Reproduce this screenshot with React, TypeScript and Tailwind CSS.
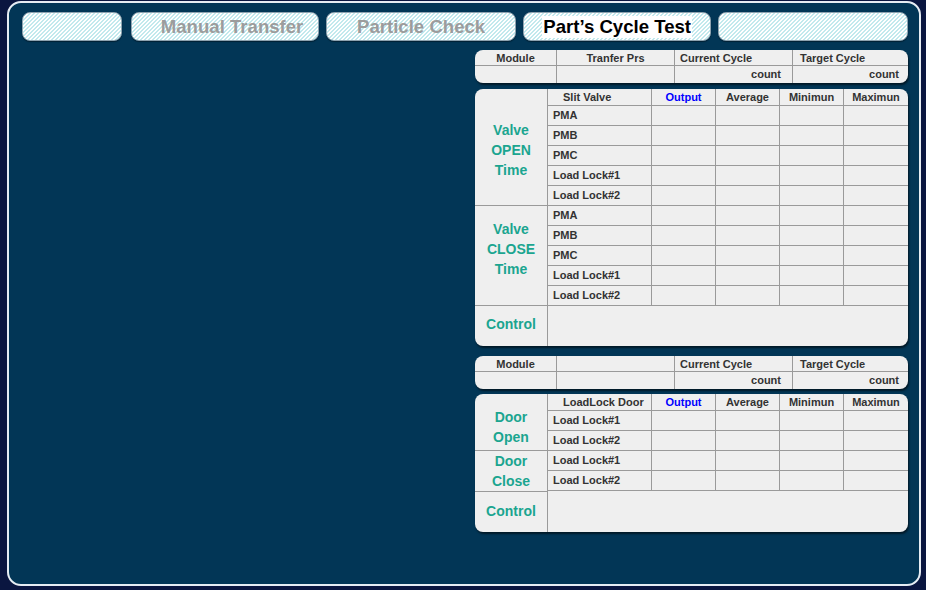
import React from 'react';

const FONT = { fontFamily: '"Liberation Sans", Arial, sans-serif' };
const STRIPES =
  'bg-[repeating-linear-gradient(135deg,#ffffff_0px,#ffffff_1.5px,#c2e9ed_1.5px,#c2e9ed_2.83px)]';
const LINE = 'border-[#9a9a9a]';

interface Group {
  label: string[];
  pt: string;
  rows: string[];
}

function Tab({ width, label, active, extra = '' }: { width: string; label?: string; active?: boolean; extra?: string }) {
  return (
    <div
      className={`${width} ${STRIPES} ${extra} flex h-[29px] items-center justify-center rounded-[8px] border border-[#8fa3b0] shadow-[0_1px_1px_rgba(0,0,0,0.4)]`}
    >
      {label && (
        <span
          className={
            active
              ? 'bg-white px-[1px] text-[18.6px] font-bold leading-[22px] text-black'
              : 'text-[18.6px] font-bold leading-[22px] text-[#9c9c9c]'
          }
        >
          {label}
        </span>
      )}
    </div>
  );
}

function SummaryTable({ second }: { second: string }) {
  const head = `border-r ${LINE} text-[11px] font-bold leading-[17px] text-[#333]`;
  return (
    <div className="flex h-[33px] flex-col rounded-[8px] bg-[#efefef] shadow-[1px_2px_2px_rgba(0,0,0,0.55)]">
      <div className={`flex h-[16px] border-b ${LINE}`}>
        <div className={`${head} w-[82px] text-center`}>Module</div>
        <div className={`${head} w-[118px] text-center`}>{second}</div>
        <div className={`${head} w-[118px] pl-[5px]`}>Current Cycle</div>
        <div className="flex-1 pl-[7px] text-[11px] font-bold leading-[17px] text-[#333]">Target Cycle</div>
      </div>
      <div className="flex flex-1">
        <div className={`w-[82px] border-r ${LINE}`} />
        <div className={`w-[118px] border-r ${LINE}`} />
        <div className={`w-[118px] border-r ${LINE} pr-[11px] text-right text-[11px] font-bold leading-[17px] text-[#333]`}>
          count
        </div>
        <div className="flex-1 pr-[9px] text-right text-[11px] font-bold leading-[17px] text-[#333]">count</div>
      </div>
    </div>
  );
}

function TimeTable({ first, groups, controlPt }: { first: string; groups: Group[]; controlPt: string }) {
  const cell = `border-r ${LINE}`;
  const head = 'text-[11px] font-bold leading-[16px] text-[#333] text-center';
  return (
    <div className="flex flex-col rounded-[8px] bg-[#efefef] shadow-[1px_2px_2px_rgba(0,0,0,0.55)]">
      {groups.map((g, gi) => (
        <div key={gi} className="flex">
          <div
            className={`w-[73px] border-r border-b ${LINE} ${g.pt} text-center text-[14px] font-bold leading-[20px] text-[#1ba590]`}
          >
            {g.label.map((l) => (
              <div key={l}>{l}</div>
            ))}
          </div>
          <div className="flex flex-1 flex-col">
            {gi === 0 && (
              <div className={`flex h-[17px] border-b ${LINE}`}>
                <div className={`${cell} w-[104px] pl-[15px] text-[11px] font-bold leading-[16px] text-[#333]`}>{first}</div>
                <div className={`${cell} w-[64px] text-center text-[11px] font-bold leading-[16px] text-[#0000ff]`}>
                  Output
                </div>
                <div className={`${cell} ${head} w-[64px]`}>Average</div>
                <div className={`${cell} ${head} w-[64px]`}>Minimun</div>
                <div className={`${head} flex-1`}>Maximun</div>
              </div>
            )}
            {g.rows.map((r, ri) => (
              <div key={ri} className={`flex h-[20px] border-b ${LINE}`}>
                <div className={`${cell} w-[104px] pl-[5px] text-[11px] font-bold leading-[18px] text-[#333]`}>{r}</div>
                <div className={`${cell} w-[64px]`} />
                <div className={`${cell} w-[64px]`} />
                <div className={`${cell} w-[64px]`} />
                <div className="flex-1" />
              </div>
            ))}
          </div>
        </div>
      ))}
      <div className="flex h-[40px]">
        <div
          className={`w-[73px] border-r ${LINE} ${controlPt} text-center text-[14px] font-bold leading-[20px] text-[#1ba590]`}
        >
          Control
        </div>
        <div className="flex-1" />
      </div>
    </div>
  );
}

const valveRows = ['PMA', 'PMB', 'PMC', 'Load Lock#1', 'Load Lock#2'];
const doorRows = ['Load Lock#1', 'Load Lock#2'];

export default function App() {
  return (
    <div style={FONT} className="h-[590px] w-[926px] bg-[#0a1640] pb-[4px] pl-[7px] pr-[5px] pt-[1px]">
      <div className="flex h-full flex-col rounded-[14px] border-2 border-[#e6edf3] bg-[#023656] pl-[13px] pr-[11px] pt-[9px]">
        <div className="flex gap-[7px]">
          <Tab width="w-[100px] mr-[2px]" />
          <Tab width="w-[189px]" label="Manual Transfer" extra="pl-[14px]" />
          <Tab width="w-[190px]" label="Particle Check" />
          <Tab width="w-[189px]" label="Part’s Cycle Test" active />
          <Tab width="w-[190px]" />
        </div>
        <div className="mt-[9px] flex">
          <div className="flex-1" />
          <div className="flex w-[433px] flex-col">
            <SummaryTable second="Tranfer Prs" />
            <div className="mt-[6px]">
              <TimeTable
                first="Slit Valve"
                controlPt="pt-[8px]"
                groups={[
                  { label: ['Valve', 'OPEN', 'Time'], pt: 'pt-[31px]', rows: valveRows },
                  { label: ['Valve', 'CLOSE', 'Time'], pt: 'pt-[13px]', rows: valveRows },
                ]}
              />
            </div>
            <div className="mt-[10px]">
              <SummaryTable second="" />
            </div>
            <div className="mt-[5px]">
              <TimeTable
                first="LoadLock Door"
                controlPt="pt-[9px]"
                groups={[
                  { label: ['Door', 'Open'], pt: 'pt-[13px]', rows: doorRows },
                  { label: ['Door', 'Close'], pt: 'pt-0', rows: doorRows },
                ]}
              />
            </div>
          </div>
        </div>
      </div>
    </div>
  );
}
